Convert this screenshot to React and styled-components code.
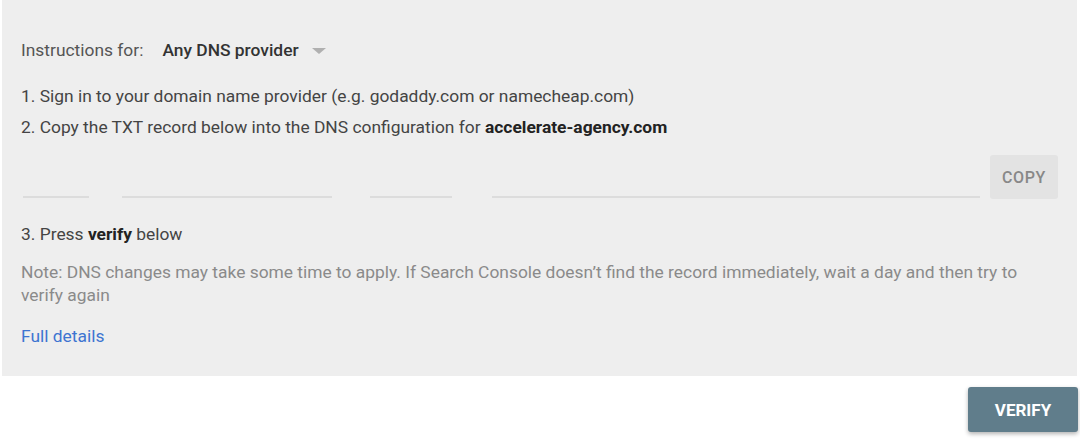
import styled, { createGlobalStyle } from "styled-components";

//global
const GlobalStyle = createGlobalStyle`
  body {
    margin: 0;
    background: #ffffff;
    font-family: Roboto, "Liberation Sans", Arial, sans-serif;
  }
`;

//record segments (value hidden in the shot)
const segments = [
  { left: 21, width: 66 },
  { left: 33, width: 210 },
  { left: 38, width: 82 },
  { left: 40, width: 488 },
];

const App = () => {
  return (
    <>
      <GlobalStyle />
      <Page>
        <Panel>
          <Picker>
            <Label>Instructions for:</Label>
            <Provider>
              Any DNS provider
              <Caret />
            </Provider>
          </Picker>
          <Step>1. Sign in to your domain name provider (e.g. godaddy.com or namecheap.com)</Step>
          <Step>
            2. Copy the TXT record below into the DNS configuration for{" "}
            <b>accelerate-agency.com</b>
          </Step>
          <RecordRow>
            <Record>
              {segments.map((s, i) => (
                <Underline key={i} style={{ marginLeft: s.left, width: s.width }} />
              ))}
            </Record>
            <CopyButton>Copy</CopyButton>
          </RecordRow>
          <Step>
            3. Press <b>verify</b> below
          </Step>
          <Note>
            Note: DNS changes may take some time to apply. If Search Console doesn’t find the record
            immediately, wait a day and then try to verify again
          </Note>
          <Details href="#">Full details</Details>
        </Panel>
        <Footer>
          <VerifyButton>Verify</VerifyButton>
        </Footer>
      </Page>
    </>
  );
};

//styled components
const Page = styled.div`
  width: 1080px;
  height: 447px;
  display: flex;
  flex-direction: column;
`;
const Panel = styled.div`
  margin: 0 3px 0 2px;
  height: 376px;
  background: #eeeeee;
  padding: 38px 19px 0 19px;
  box-sizing: border-box;
  color: #444;
  font-size: 17.4px;
`;
const Picker = styled.div`
  display: flex;
  align-items: center;
  height: 24px;
  margin-bottom: 22px;
`;
const Label = styled.span`
  color: #555;
  margin-right: 19px;
`;
const Provider = styled.span`
  color: #333;
  font-weight: 500;
  display: flex;
  align-items: center;
`;
const Caret = styled.span`
  margin-left: 13px;
  margin-top: 2px;
  width: 0;
  height: 0;
  border-left: 7px solid transparent;
  border-right: 7px solid transparent;
  border-top: 6px solid #b0b0b0;
`;
const Step = styled.div`
  height: 31px;
  line-height: 24px;
  color: #444;
  b {
    color: #222;
    font-weight: 700;
  }
`;
const RecordRow = styled.div`
  display: flex;
  align-items: flex-end;
  gap: 10px;
  margin: 8px 0 23px 0;
`;
const Record = styled.div`
  flex: 1;
  display: flex;
  align-items: flex-end;
  height: 44px;
  padding-bottom: 1px;
  margin-left: -19px;
`;
const Underline = styled.div`
  height: 2px;
  background: #dcdcdc;
`;
const CopyButton = styled.button`
  width: 70px;
  height: 44px;
  border: none;
  border-radius: 3px;
  background: #e3e3e3;
  color: #888;
  font-family: Roboto, "Liberation Sans", Arial, sans-serif;
  font-size: 16px;
  font-weight: 500;
  letter-spacing: 0.6px;
  text-transform: uppercase;
`;
const Note = styled.p`
  margin: 8px 0 0 0;
  color: #8a8a8a;
  line-height: 23px;
  max-width: 1010px;
`;
const Details = styled.a`
  display: inline-block;
  margin-top: 19px;
  color: #3d74d1;
  text-decoration: none;
`;
const Footer = styled.div`
  display: flex;
  justify-content: flex-end;
  padding: 11px 2px 0 0;
`;
const VerifyButton = styled.button`
  width: 110px;
  height: 45px;
  border: none;
  border-radius: 3px;
  background: #607d8b;
  color: #ffffff;
  font-family: Roboto, "Liberation Sans", Arial, sans-serif;
  font-size: 17px;
  font-weight: 700;
  text-transform: uppercase;
  box-shadow: 0 2px 4px rgba(0, 0, 0, 0.3);
`;

export default App;
